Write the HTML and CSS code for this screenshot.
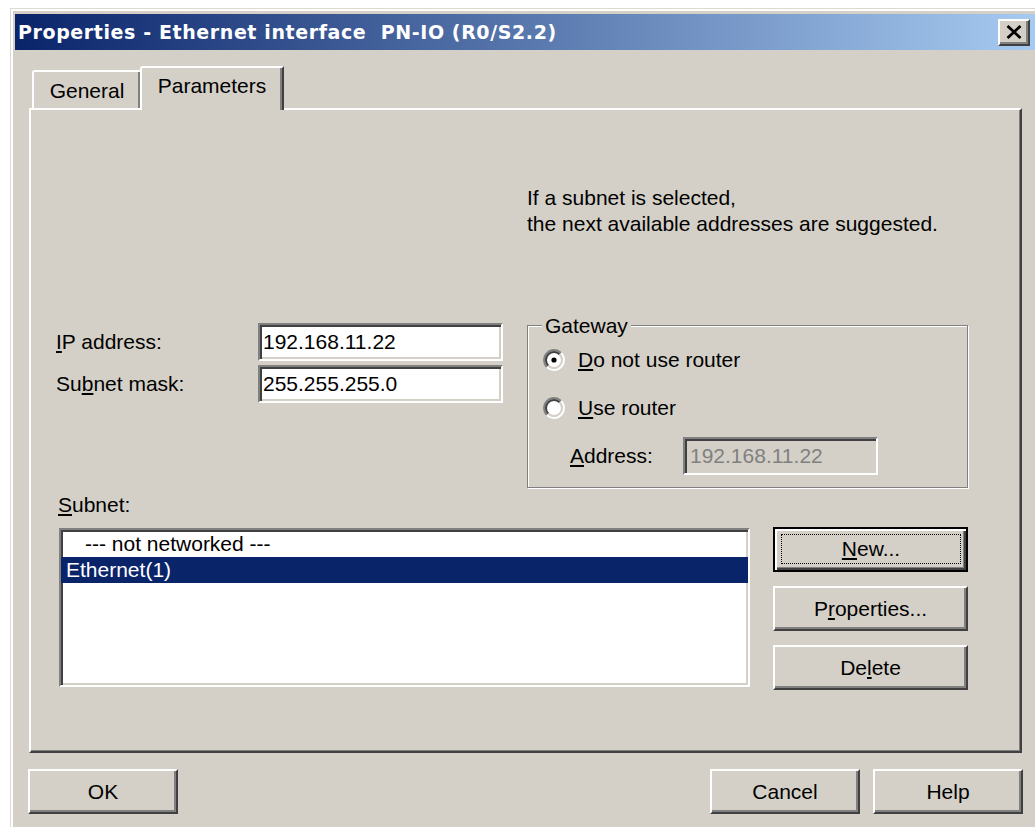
FILE: index.html
```html
<!DOCTYPE html>
<html lang="en">
<head>
<meta charset="utf-8">
<title>Properties - Ethernet interface PN-IO</title>
<link rel="stylesheet" href="styles.css">
</head>
<body>
<div class="window">
  <div class="titlebar">
    <span class="title">Properties - Ethernet interface&nbsp; PN-IO (R0/S2.2)</span>
    <button class="close" aria-label="Close">
      <svg width="16" height="14" viewBox="0 0 16 14"><path d="M1.5 1 L14.5 13 M14.5 1 L1.5 13" stroke="#000" stroke-width="2.8" fill="none"/></svg>
    </button>
  </div>

  <div class="tabs">
    <div class="tab">General</div>
    <div class="tab active">Parameters</div>
  </div>

  <div class="panel">
    <p class="hint">If a subnet is selected,<br>the next available addresses are suggested.</p>

    <div class="addr-section">
      <div class="fields">
        <div class="field">
          <span class="label"><u>I</u>P address:</span>
          <div class="edit">192.168.11.22</div>
        </div>
        <div class="field">
          <span class="label">Su<u>b</u>net mask:</span>
          <div class="edit">255.255.255.0</div>
        </div>
      </div>

      <div class="group">
        <div class="legend">Gateway</div>
        <div class="radio-row first">
          <svg class="radio" width="22" height="22" viewBox="0 0 22 22">
            <circle cx="11" cy="11" r="8" fill="#fff"/>
            <path d="M3.93 18.07 A10 10 0 0 1 18.07 3.93" stroke="#808080" stroke-width="2" fill="none"/>
            <path d="M18.07 3.93 A10 10 0 0 1 3.93 18.07" stroke="#fff" stroke-width="2" fill="none"/>
            <path d="M5.34 16.66 A8 8 0 0 1 16.66 5.34" stroke="#404040" stroke-width="2" fill="none"/>
            <path d="M16.66 5.34 A8 8 0 0 1 5.34 16.66" stroke="#d4d0c8" stroke-width="2" fill="none"/>
            <circle cx="11" cy="11" r="2.6" fill="#000"/>
          </svg>
          <span><u>D</u>o not use router</span>
        </div>
        <div class="radio-row second">
          <svg class="radio" width="22" height="22" viewBox="0 0 22 22">
            <circle cx="11" cy="11" r="8" fill="#fff"/>
            <path d="M3.93 18.07 A10 10 0 0 1 18.07 3.93" stroke="#808080" stroke-width="2" fill="none"/>
            <path d="M18.07 3.93 A10 10 0 0 1 3.93 18.07" stroke="#fff" stroke-width="2" fill="none"/>
            <path d="M5.34 16.66 A8 8 0 0 1 16.66 5.34" stroke="#404040" stroke-width="2" fill="none"/>
            <path d="M16.66 5.34 A8 8 0 0 1 5.34 16.66" stroke="#d4d0c8" stroke-width="2" fill="none"/>
          </svg>
          <span><u>U</u>se router</span>
        </div>
        <div class="router-row">
          <span class="label"><u>A</u>ddress:</span>
          <div class="edit disabled">192.168.11.22</div>
        </div>
      </div>
    </div>

    <div class="subnet-label"><u>S</u>ubnet:</div>

    <div class="subnet-section">
      <div class="listbox">
        <div class="item indent">--- not networked ---</div>
        <div class="item selected">Ethernet(1)</div>
      </div>
      <div class="side-buttons">
        <button class="btn default"><span class="focus"><u>N</u>ew...</span></button>
        <button class="btn">P<u>r</u>operties...</button>
        <button class="btn">De<u>l</u>ete</button>
      </div>
    </div>
  </div>

  <div class="footer">
    <button class="btn wide">OK</button>
    <span class="spacer"></span>
    <button class="btn wide">Cancel</button>
    <button class="btn wide">Help</button>
  </div>
</div>
</body>
</html>
```

FILE: styles.css
```css
html, body {
  margin: 0;
  padding: 0;
}

body {
  width: 1035px;
  height: 827px;
  overflow: hidden;
  background: #fff;
  font-family: "Liberation Sans", Arial, sans-serif;
  font-size: 21px;
  color: #000;
}

u {
  text-decoration-thickness: 2px;
  text-underline-offset: 2px;
}

/* dialog frame; its right edge runs past the visible area */
.window {
  box-sizing: border-box;
  width: 1025px;
  height: 819px;
  margin: 8px 0 0 10px;
  padding: 5px 0 0 4px;
  background: #d4d0c8;
  border-top: 1px solid #dcd9d2;
  border-left: 1px solid #dcd9d2;
  box-shadow: inset 2px 2px 0 #fff;
}

.titlebar {
  height: 36px;
  display: flex;
  align-items: center;
  padding-left: 3px;
  background: linear-gradient(to right, #0a246a, #a6caf0);
}

.title {
  color: #fff;
  font-family: "DejaVu Sans", Verdana, sans-serif;
  font-weight: bold;
  font-size: 19px;
  letter-spacing: 0.6px;
  white-space: nowrap;
}

.close {
  box-sizing: border-box;
  margin-left: auto;
  margin-right: 5px;
  width: 32px;
  height: 27px;
  padding: 0;
  display: flex;
  align-items: center;
  justify-content: center;
  background: #d4d0c8;
  border: 2px solid;
  border-color: #fff #404040 #404040 #fff;
  box-shadow: inset -2px -2px 0 #808080;
}

/* tab strip */
.tabs {
  display: flex;
  align-items: flex-end;
  height: 42px;
  margin: 16px 0 0 17px;
}

.tab {
  box-sizing: border-box;
  width: 110px;
  height: 38px;
  padding-top: 6px;
  text-align: center;
  line-height: 26px;
  border-top: 2px solid #fff;
  border-left: 2px solid #fff;
  border-right: 2px solid #404040;
  border-top-left-radius: 3px;
  box-shadow: inset -2px 0 0 #808080;
  background: #d4d0c8;
}

.tab.active {
  position: relative;
  z-index: 1;
  width: 144px;
  height: 44px;
  margin-left: -2px;
  margin-bottom: -2px;
  padding-top: 5px;
}

/* tab page */
.panel {
  box-sizing: border-box;
  height: 645px;
  margin: 0 13px 0 14px;
  border: 2px solid;
  border-color: #fff #404040 #404040 #fff;
  box-shadow: inset -1px -1px 0 #808080;
}

.hint {
  margin: 75px 0 0 496px;
  line-height: 26px;
}

.addr-section {
  display: flex;
  align-items: flex-start;
  margin-top: 86px;
}

.fields {
  display: flex;
  flex-direction: column;
  gap: 4px;
  padding-left: 25px;
}

.field {
  display: flex;
  align-items: center;
  height: 38px;
}

.field .label {
  width: 202px;
}

/* sunken edit box */
.edit {
  box-sizing: border-box;
  width: 245px;
  height: 38px;
  padding-left: 3px;
  display: flex;
  align-items: center;
  background: #fff;
  border: 2px solid;
  border-color: #808080 #fff #fff #808080;
  box-shadow: inset 2px 2px 0 #404040, inset -2px -2px 0 #d4d0c8;
  white-space: nowrap;
}

.edit.disabled {
  width: 195px;
  padding-left: 5px;
  background: #d4d0c8;
  color: #808080;
}

/* Gateway group box */
.group {
  box-sizing: border-box;
  width: 441px;
  height: 163px;
  margin: 2px 0 0 24px;
  padding-left: 15px;
  border: 1px solid #808080;
  box-shadow: inset 1px 1px 0 #fff, 1px 1px 0 #fff;
}

.legend {
  width: fit-content;
  margin: -12px 0 0 -1px;
  padding: 0 3px;
  line-height: 24px;
  background: #d4d0c8;
}

.radio-row {
  display: flex;
  align-items: center;
  gap: 13px;
}

.radio-row.first {
  height: 44px;
}

.radio-row.second {
  height: 52px;
}

.radio {
  flex: none;
}

.router-row {
  display: flex;
  align-items: center;
  margin-top: 3px;
  height: 38px;
}

.router-row .label {
  width: 113px;
  padding-left: 27px;
}

/* subnet list */
.subnet-label {
  margin: 5px 0 0 27px;
  line-height: 24px;
}

.subnet-section {
  display: flex;
  align-items: flex-start;
  margin-top: 10px;
}

.listbox {
  box-sizing: border-box;
  width: 691px;
  height: 159px;
  margin: 1px 0 0 28px;
  padding-top: 1px;
  background: #fff;
  border: 2px solid;
  border-color: #808080 #fff #fff #808080;
  box-shadow: inset 2px 2px 0 #404040, inset -2px -2px 0 #d4d0c8;
}

.item {
  height: 26px;
  line-height: 26px;
  padding-left: 5px;
  white-space: nowrap;
}

.item.indent {
  padding-left: 24px;
}

.item.selected {
  background: #0a246a;
  color: #fff;
}

.side-buttons {
  display: flex;
  flex-direction: column;
  gap: 14px;
  margin-left: 23px;
}

/* push buttons */
.btn {
  box-sizing: border-box;
  width: 195px;
  height: 45px;
  padding: 0;
  display: flex;
  align-items: center;
  justify-content: center;
  font: inherit;
  color: #000;
  background: #d4d0c8;
  border: 2px solid;
  border-color: #fff #404040 #404040 #fff;
  box-shadow: inset -2px -2px 0 #808080;
}

.btn.default {
  align-items: stretch;
  border-color: #000;
  box-shadow: inset 2px 2px 0 #fff, inset -2px -2px 0 #404040, inset -3px -3px 0 #808080;
}

.focus {
  flex: 1;
  display: flex;
  align-items: center;
  justify-content: center;
  margin: 5px 5px 6px 6px;
  border: 1px dotted #000;
}

.footer {
  display: flex;
  gap: 13px;
  margin-top: 16px;
  padding: 0 12px 0 13px;
}

.btn.wide {
  width: 150px;
}

.spacer {
  flex: 1;
}
```
